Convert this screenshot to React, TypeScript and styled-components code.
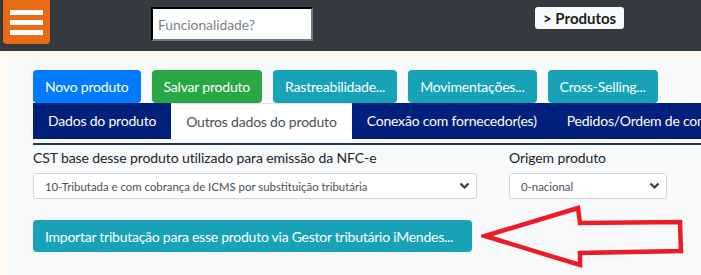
import React from 'react';
import styled, { createGlobalStyle } from 'styled-components';

const GlobalStyle = createGlobalStyle`
  html, body {
    margin: 0;
    padding: 0;
    background: #fffbf2;
    overflow: hidden;
  }
  * {
    box-sizing: border-box;
  }
`;

const uiFont = `Lato, "Noto Sans", sans-serif`;

const Header = styled.header`
  display: flex;
  align-items: flex-start;
  height: 51px;
  background-color: #343a40;
`;

const MenuButton = styled.button`
  display: flex;
  flex-direction: column;
  justify-content: center;
  align-items: center;
  gap: 5px;
  width: 47px;
  height: 44px;
  margin-left: 3px;
  padding: 0;
  border: none;
  border-radius: 0 0 4px 4px;
  background-color: #e96a15;
`;

const MenuBar = styled.span`
  display: block;
  width: 33px;
  height: 5px;
  background-color: #ffffff;
`;

const SearchInput = styled.input`
  width: 162px;
  height: 34px;
  margin: 7px 0 0 101px;
  padding: 0 5px;
  border: 2px inset #767676;
  border-top-color: #1e1e1e;
  border-left-color: #1e1e1e;
  background: #ffffff;
  font-family: Lato, sans-serif;
  font-size: 13.8px;
  color: #333;
  outline: none;

  &::placeholder {
    color: #7b7f86;
  }
`;

const Breadcrumb = styled.span`
  margin: 7px 0 0 222px;
  height: 22px;
  padding: 0 8px;
  border-radius: 3px;
  background-color: #f8f9fa;
  font-family: ${uiFont};
  font-size: 15px;
  font-weight: 700;
  line-height: 22px;
  color: #1b1e22;
`;

const Main = styled.main`
  padding: 9px 0 0 8px;
`;

const Panel = styled.section`
  min-height: 215px;
  padding: 10px 0 0 25px;
  background-color: #f8f9fa;
  font-family: ${uiFont};
`;

const ButtonRow = styled.div`
  display: flex;
  gap: 11px;
`;

const ActionButton = styled.button<{ $color: string }>`
  height: 33px;
  padding: 0 12px;
  border: none;
  border-radius: 4px;
  background-color: ${(p) => p.$color};
  color: #ffffff;
  font-family: ${uiFont};
  font-size: 14px;
  letter-spacing: -0.2px;
  white-space: nowrap;
`;

const TabBar = styled.nav`
  display: flex;
  width: max-content;
  min-width: 100%;
  padding-bottom: 4px;
  border-bottom: 2px solid #1d3557;
`;

const Tab = styled.span<{ $active?: boolean }>`
  height: 36px;
  padding: 0 15px;
  line-height: 36px;
  font-size: 14px;
  letter-spacing: -0.2px;
  white-space: nowrap;
  background-color: ${(p) => (p.$active ? '#ffffff' : '#00207c')};
  color: ${(p) => (p.$active ? '#495057' : '#ffffff')};
  border-top: ${(p) => (p.$active ? '1px solid #dee2e6' : 'none')};
`;

const FormRow = styled.div`
  display: flex;
  gap: 32px;
  margin-top: 1px;
`;

const Field = styled.div<{ $width: number }>`
  width: ${(p) => p.$width}px;
`;

const Label = styled.div`
  font-size: 14px;
  letter-spacing: -0.1px;
  line-height: 24px;
  color: #212529;
  margin-bottom: 3px;
  white-space: nowrap;
`;

const SelectBox = styled.div`
  display: flex;
  align-items: center;
  justify-content: space-between;
  height: 26px;
  padding: 0 6px 0 11px;
  border: 1px solid #ced4da;
  border-radius: 3px;
  background-color: #ffffff;
  font-size: 11.4px;
  color: #495057;
  white-space: nowrap;
`;

const ImportRow = styled.div`
  display: flex;
  align-items: center;
  margin-top: 5px;
`;

const ImportButton = styled(ActionButton)`
  width: 439px;
  height: 32px;
  padding: 0 12px;
  text-align: left;
  letter-spacing: -0.25px;
`;

const Arrow = styled.svg`
  margin-left: 9px;
  flex-shrink: 0;
`;

const Chevron = () => (
  <svg width="11" height="8" viewBox="0 0 11 8">
    <path d="M1.5 1.5 L5.5 5.5 L9.5 1.5" fill="none" stroke="#343a40" strokeWidth="2.2" />
  </svg>
);

export default function App() {
  return (
    <>
      <GlobalStyle />
      <Header>
        <MenuButton aria-label="menu">
          <MenuBar />
          <MenuBar />
          <MenuBar />
        </MenuButton>
        <SearchInput placeholder="Funcionalidade?" />
        <Breadcrumb>&gt; Produtos</Breadcrumb>
      </Header>
      <Main>
        <Panel>
          <ButtonRow>
            <ActionButton $color="#007bff">Novo produto</ActionButton>
            <ActionButton $color="#28a745">Salvar produto</ActionButton>
            <ActionButton $color="#17a2b8">Rastreabilidade...</ActionButton>
            <ActionButton $color="#17a2b8">Movimentações...</ActionButton>
            <ActionButton $color="#17a2b8">Cross-Selling...</ActionButton>
          </ButtonRow>
          <TabBar>
            <Tab>Dados do produto</Tab>
            <Tab $active>Outros dados do produto</Tab>
            <Tab>Conexão com fornecedor(es)</Tab>
            <Tab>Pedidos/Ordem de compra</Tab>
          </TabBar>
          <FormRow>
            <Field $width={444}>
              <Label>CST base desse produto utilizado para emissão da NFC-e</Label>
              <SelectBox>
                <span>10-Tributada e com cobrança de ICMS por substituição tributária</span>
                <Chevron />
              </SelectBox>
            </Field>
            <Field $width={158}>
              <Label>Origem produto</Label>
              <SelectBox>
                <span>0-nacional</span>
                <Chevron />
              </SelectBox>
            </Field>
          </FormRow>
          <ImportRow>
            <ImportButton $color="#17a2b8">
              Importar tributação para esse produto via Gestor tributário iMendes...
            </ImportButton>
            <Arrow width="206" height="64" viewBox="0 0 206 64">
              <polygon
                points="4,32 97,4 99,19 199,18 200,47 99,49 99,61"
                fill="none"
                stroke="#ed1c24"
                strokeWidth="4.5"
                strokeLinejoin="miter"
              />
            </Arrow>
          </ImportRow>
        </Panel>
      </Main>
    </>
  );
}
